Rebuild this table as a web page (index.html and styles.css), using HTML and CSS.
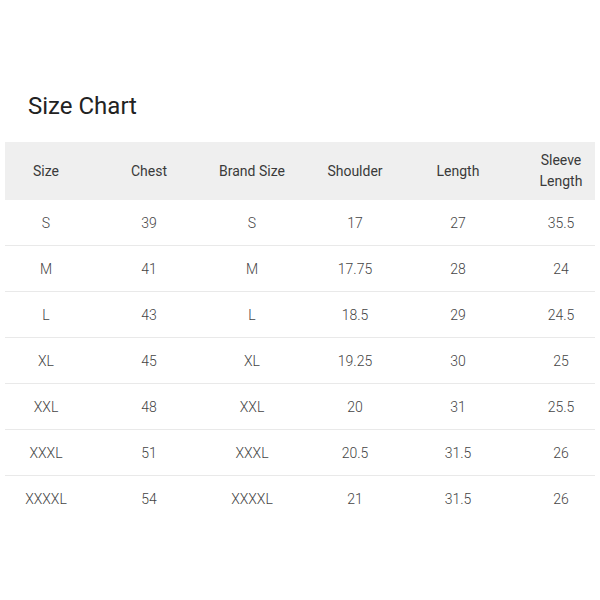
FILE: index.html
```html
<!DOCTYPE html>
<html>
<head>
<meta charset="utf-8">
<link rel="stylesheet" href="styles.css">
</head>
<body>
<div class="page">
  <h1 class="title">Size Chart</h1>
  <div class="chart">
    <div class="grid">
      <div class="row head">
        <div class="cell">Size</div>
        <div class="cell">Chest</div>
        <div class="cell">Brand Size</div>
        <div class="cell">Shoulder</div>
        <div class="cell">Length</div>
        <div class="cell">Sleeve<br>Length</div>
      </div>
      <div class="row">
        <div class="cell">S</div><div class="cell">39</div><div class="cell">S</div><div class="cell">17</div><div class="cell">27</div><div class="cell">35.5</div>
      </div>
      <div class="row">
        <div class="cell">M</div><div class="cell">41</div><div class="cell">M</div><div class="cell">17.75</div><div class="cell">28</div><div class="cell">24</div>
      </div>
      <div class="row">
        <div class="cell">L</div><div class="cell">43</div><div class="cell">L</div><div class="cell">18.5</div><div class="cell">29</div><div class="cell">24.5</div>
      </div>
      <div class="row">
        <div class="cell">XL</div><div class="cell">45</div><div class="cell">XL</div><div class="cell">19.25</div><div class="cell">30</div><div class="cell">25</div>
      </div>
      <div class="row">
        <div class="cell">XXL</div><div class="cell">48</div><div class="cell">XXL</div><div class="cell">20</div><div class="cell">31</div><div class="cell">25.5</div>
      </div>
      <div class="row">
        <div class="cell">XXXL</div><div class="cell">51</div><div class="cell">XXXL</div><div class="cell">20.5</div><div class="cell">31.5</div><div class="cell">26</div>
      </div>
      <div class="row last">
        <div class="cell">XXXXL</div><div class="cell">54</div><div class="cell">XXXXL</div><div class="cell">21</div><div class="cell">31.5</div><div class="cell">26</div>
      </div>
    </div>
  </div>
</div>
</body>
</html>
```
FILE: styles.css
```css
html, body {
  margin: 0;
  padding: 0;
  background: #ffffff;
}
.page {
  width: 600px;
  height: 600px;
  padding-top: 92px;
  box-sizing: border-box;
  font-family: Roboto, "Liberation Sans", sans-serif;
}
.title {
  margin: 0 0 22px 28px;
  font-size: 24px;
  line-height: 28px;
  font-weight: 400;
  color: #222222;
}
.chart {
  margin: 0 5px;
  overflow: hidden;
}
.grid {
  margin-left: -10.5px;
  width: 618px;
  display: flex;
  flex-direction: column;
}
.row {
  display: grid;
  grid-template-columns: repeat(6, 103px);
  height: 46px;
  border-bottom: 1px solid #e9e9e9;
  box-sizing: border-box;
  align-items: center;
  font-size: 14px;
  font-weight: 300;
  color: #444444;
}
.row.head {
  height: 58px;
  background: #efefef;
  border-bottom: none;
  font-weight: 400;
  color: #3a3a3a;
  line-height: 21px;
}
.row.last {
  border-bottom: none;
}
.cell {
  text-align: center;
}
```
